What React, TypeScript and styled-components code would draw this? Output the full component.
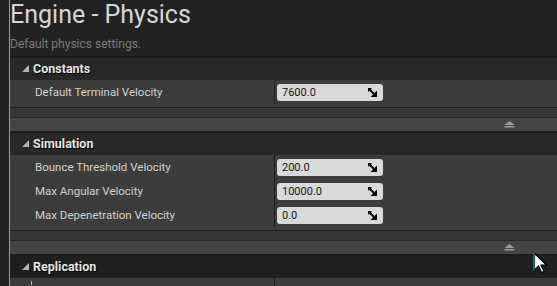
import React from "react";
import styled, { createGlobalStyle } from "styled-components";

const GlobalStyle = createGlobalStyle`
  html, body { margin: 0; padding: 0; background: #222222; overflow: hidden; }
  body { font-family: Roboto, "Noto Sans", "Liberation Sans", sans-serif; }
`;

const Page = styled.div`
  position: relative;
  display: flex;
  width: 557px;
  height: 286px;
  overflow: hidden;
  background: #222222;
`;

const Gutter = styled.div`
  width: 9px;
  flex: none;
  background: #222222;
  border-right: 1px solid #c9a110;
`;

const Main = styled.div`
  flex: 1;
  display: flex;
  flex-direction: column;
  min-width: 0;
`;

const TitleBlock = styled.div`
  display: flex;
  flex-direction: column;
  padding-bottom: 5px;
`;

const Title = styled.h1`
  margin: 0;
  font-size: 25px;
  line-height: 30px;
  font-weight: 400;
  color: #d6d6d6;
  white-space: nowrap;
`;

const Subtitle = styled.div`
  margin-top: 7px;
  font-size: 12px;
  line-height: 14px;
  color: #7c7c7c;
`;

const Section = styled.section`
  display: flex;
  flex-direction: column;
`;

const Header = styled.div<{ $dim?: boolean }>`
  box-sizing: border-box;
  height: 24px;
  border-top: 2px solid #1c1c1c;
  padding-bottom: 2px;
  background: ${(p) => (p.$dim ? "#1f1f1f" : "#282828")};
  display: flex;
  align-items: center;
  gap: 4px;
  padding-left: 12px;
  font-size: 12.5px;
  font-weight: 700;
  color: #e6e6e6;
  text-shadow: 1px 1px 1px #000;
`;

const Rows = styled.div<{ $open?: boolean }>`
  background: #3c3c3c;
  padding-bottom: ${(p) => (p.$open ? "0" : "3px")};
  display: flex;
  flex-direction: column;
`;

const Row = styled.div`
  display: grid;
  grid-template-columns: 265px 1fr;
  height: 24px;
`;

const NameCell = styled.div`
  box-sizing: border-box;
  border-right: 1px solid #1e1e1e;
  padding-left: 25px;
  display: flex;
  align-items: center;
  font-size: 11.5px;
  color: #d2d2d2;
  white-space: nowrap;
`;

const RowMark = styled.span`
  margin-top: -14px;
  margin-left: -4px;
  width: 1px;
  height: 4px;
  background: #bdbdbd;
`;

const ValueCell = styled.div`
  padding-left: 2px;
  display: flex;
  align-items: center;
`;

const Field = styled.div`
  box-sizing: border-box;
  width: 106px;
  height: 17px;
  border-radius: 3px;
  background: #d9d9d9;
  display: flex;
  align-items: center;
  justify-content: space-between;
  padding: 0 6px 0 5px;
  font-size: 11px;
  color: #151515;
`;

const Spacer = styled.div`
  height: 9px;
  border-top: 1px solid #1e1e1e;
  border-bottom: 1px solid #2a2a2a;
  background: #363636;
`;

const AdvancedBar = styled.div`
  height: 13px;
  background: #444444;
  display: flex;
  align-items: center;
  justify-content: flex-end;
  padding-right: 42px;
`;

const Cursor = styled.svg`
  position: absolute;
  left: 533px;
  top: 252px;
`;

const Expander = () => (
  <svg width="7" height="7" viewBox="0 0 7 7">
    <polygon points="7,0 7,7 0,7" fill="#b5b5b5" />
  </svg>
);

const SpinIcon = () => (
  <svg width="9" height="9" viewBox="0 0 9 9">
    <polygon points="0,0 4,0 0,4" fill="#000" />
    <line x1="1" y1="1" x2="6" y2="6" stroke="#000" strokeWidth="2" />
    <polygon points="9,2.5 9,9 2.5,9" fill="#000" />
  </svg>
);

const CollapseIcon = () => (
  <svg width="11" height="7" viewBox="0 0 11 7">
    <polygon points="5.5,0 10.5,4 0.5,4" fill="#9c9c9c" />
    <rect x="0.5" y="5" width="10" height="1.5" fill="#9c9c9c" />
  </svg>
);

type Prop = { name: string; value: string };

const sections: { title: string; props: Prop[] }[] = [
  { title: "Constants", props: [{ name: "Default Terminal Velocity", value: "7600.0" }] },
  {
    title: "Simulation",
    props: [
      { name: "Bounce Threshold Velocity", value: "200.0" },
      { name: "Max Angular Velocity", value: "10000.0" },
      { name: "Max Depenetration Velocity", value: "0.0" },
    ],
  },
];

export default function App() {
  return (
    <Page>
      <GlobalStyle />
      <Gutter />
      <Main>
        <TitleBlock>
          <Title>Engine - Physics</Title>
          <Subtitle>Default physics settings.</Subtitle>
        </TitleBlock>
        {sections.map((s) => (
          <Section key={s.title}>
            <Header>
              <Expander />
              {s.title}
            </Header>
            <Rows>
              {s.props.map((p) => (
                <Row key={p.name}>
                  <NameCell>{p.name}</NameCell>
                  <ValueCell>
                    <Field>
                      <span>{p.value}</span>
                      <SpinIcon />
                    </Field>
                  </ValueCell>
                </Row>
              ))}
            </Rows>
            <Spacer />
            <AdvancedBar>
              <CollapseIcon />
            </AdvancedBar>
          </Section>
        ))}
        <Section>
          <Header $dim>
            <Expander />
            Replication
          </Header>
          <Rows $open>
            <Row>
              <NameCell>
                <RowMark />
              </NameCell>
              <ValueCell />
            </Row>
          </Rows>
        </Section>
      </Main>
      <Cursor width="16" height="22" viewBox="0 0 16 22">
        <path d="M1.5 1.5 L1.5 18 L5.5 14 L8.5 20.5 L11 19.5 L8 13 L13.5 13 Z" fill="#fff" stroke="#000" strokeWidth="1.2" strokeLinejoin="miter" />
        <path d="M1 1 L1 18.5" stroke="#1fb8c8" strokeWidth="1" />
      </Cursor>
    </Page>
  );
}
